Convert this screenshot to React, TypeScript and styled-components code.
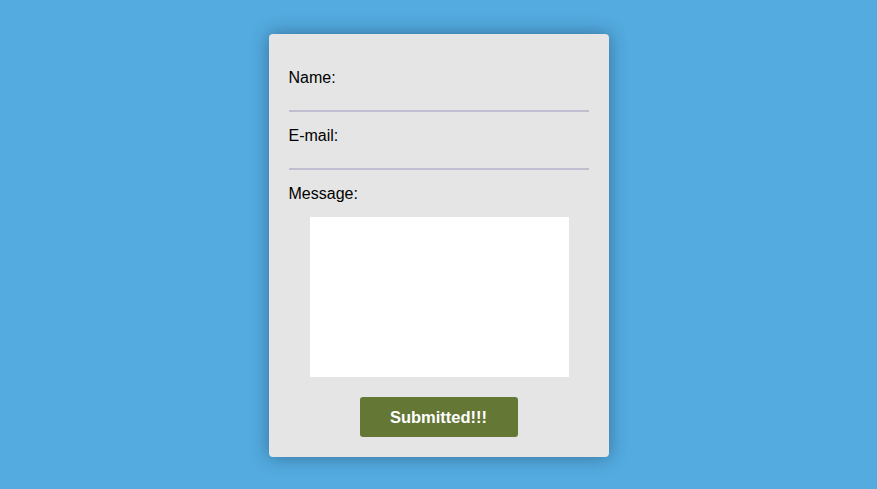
import styled, { createGlobalStyle } from 'styled-components'

const Global = createGlobalStyle`
  html, body {
    margin: 0;
    padding: 0;
    background: #53abdf;
    font-family: "Liberation Sans", Arial, sans-serif;
  }
`

const Page = styled.div`
  min-height: 489px;
  padding-top: 34px;
  box-sizing: border-box;
`

const Card = styled.form`
  width: 340px;
  margin: 0 auto;
  box-sizing: border-box;
  padding: 34px 20px 20px;
  background: #e5e5e5;
  border-radius: 4px;
  box-shadow: 0 0 18px rgba(20, 40, 70, 0.45);
  display: flex;
  flex-direction: column;
`

const Field = styled.div`
  display: flex;
  flex-direction: column;
  margin-bottom: 14px;
`

const Label = styled.label`
  display: block;
  padding-top: 1px;
  font-size: 16px;
  line-height: 18px;
  color: #000;
`

const Input = styled.input`
  height: 25px;
  box-sizing: border-box;
  border: none;
  border-bottom: 2px solid #c1bed2;
  background: transparent;
  outline: none;
  font-family: inherit;
  font-size: 16px;
  padding: 0;
`

const TextArea = styled.textarea`
  display: block;
  width: 259px;
  height: 160px;
  margin: 14px 0 0 21px;
  border: none;
  background: #fff;
  resize: none;
  outline: none;
  padding: 0;
`

const Button = styled.button`
  align-self: center;
  width: 158px;
  height: 40px;
  margin-top: 20px;
  border: none;
  border-radius: 3px;
  background: #647735;
  color: #fff;
  font-family: "Liberation Sans", Arial, sans-serif;
  font-weight: bold;
  font-size: 16.5px;
  cursor: pointer;
`

export default function App() {
  return (
    <Page>
      <Global />
      <Card onSubmit={e => e.preventDefault()}>
        <Field>
          <Label>Name:</Label>
          <Input type="text" />
        </Field>
        <Field>
          <Label>E-mail:</Label>
          <Input type="email" />
        </Field>
        <Label>Message:</Label>
        <TextArea />
        <Button type="submit">Submitted!!!</Button>
      </Card>
    </Page>
  )
}
